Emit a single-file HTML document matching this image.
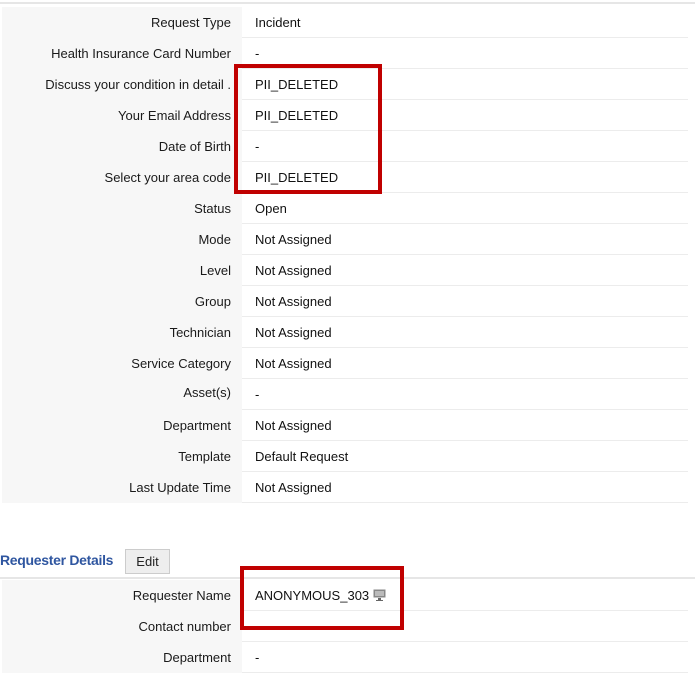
<!DOCTYPE html>
<html><head><style>
body{margin:0;width:695px;height:677px;background:#fff;font-family:"Liberation Sans",sans-serif;font-size:13px;color:#222;position:relative;overflow:hidden}
.top{position:absolute;left:0;top:2px;width:695px;height:2px;background:#e6e6e6}
.row{position:absolute;left:2px;width:686px;height:30px;border-bottom:1px solid #ececec}
.lab{position:absolute;left:0;top:0;width:240px;height:31px;background:#f7f7f7;text-align:right;line-height:32px;color:#1a1a1a}
.lab span{padding-right:11px}
.val{position:absolute;left:253px;top:0;line-height:32px;color:#111}
.box{position:absolute;border:4px solid #c00000}
.hdr{position:absolute;left:0;top:552px;color:#2f56a0;font-size:14px;font-weight:bold;letter-spacing:-0.3px}
.btn{position:absolute;left:125px;top:549px;width:43px;height:23px;background:#eee;border:1px solid #ccc;text-align:center;line-height:24px}
.line2{position:absolute;left:0;top:577px;width:695px;height:2px;background:#e6e6e6}
</style></head><body>
<div class="top"></div>
<div class="row" style="top:7px"><div class="lab"><span>Request Type</span></div><div class="val">Incident</div></div>
<div class="row" style="top:38px"><div class="lab"><span>Health Insurance Card Number</span></div><div class="val">-</div></div>
<div class="row" style="top:69px"><div class="lab"><span>Discuss your condition in detail .</span></div><div class="val">PII_DELETED</div></div>
<div class="row" style="top:100px"><div class="lab"><span>Your Email Address</span></div><div class="val">PII_DELETED</div></div>
<div class="row" style="top:131px"><div class="lab"><span>Date of Birth</span></div><div class="val">-</div></div>
<div class="row" style="top:162px"><div class="lab"><span>Select your area code</span></div><div class="val">PII_DELETED</div></div>
<div class="row" style="top:193px"><div class="lab"><span>Status</span></div><div class="val">Open</div></div>
<div class="row" style="top:224px"><div class="lab"><span>Mode</span></div><div class="val">Not Assigned</div></div>
<div class="row" style="top:255px"><div class="lab"><span>Level</span></div><div class="val">Not Assigned</div></div>
<div class="row" style="top:286px"><div class="lab"><span>Group</span></div><div class="val">Not Assigned</div></div>
<div class="row" style="top:317px"><div class="lab"><span>Technician</span></div><div class="val">Not Assigned</div></div>
<div class="row" style="top:348px"><div class="lab"><span>Service Category</span></div><div class="val">Not Assigned</div></div>
<div class="row" style="top:379px"><div class="lab" style="line-height:28px"><span>Asset(s)</span></div><div class="val">-</div></div>
<div class="row" style="top:410px"><div class="lab"><span>Department</span></div><div class="val">Not Assigned</div></div>
<div class="row" style="top:441px"><div class="lab"><span>Template</span></div><div class="val">Default Request</div></div>
<div class="row" style="top:472px"><div class="lab"><span>Last Update Time</span></div><div class="val">Not Assigned</div></div>
<div class="box" style="left:234px;top:64px;width:140px;height:122px"></div>
<div class="hdr">Requester Details</div>
<div class="btn">Edit</div>
<div class="line2"></div>
<div class="row" style="top:580px"><div class="lab"><span>Requester Name</span></div><div class="val">ANONYMOUS_303 <svg width="13" height="12" viewBox="0 0 13 12" style="vertical-align:-1px"><rect x="0.5" y="0.5" width="12" height="8" fill="#888"/><rect x="2" y="2" width="9" height="5" fill="#bbb"/><rect x="5" y="9" width="3" height="2" fill="#666"/><rect x="3" y="11" width="7" height="1" fill="#666"/></svg></div></div>
<div class="row" style="top:611px"><div class="lab"><span>Contact number</span></div><div class="val"></div></div>
<div class="row" style="top:642px"><div class="lab"><span>Department</span></div><div class="val">-</div></div>
<div class="box" style="left:240px;top:566px;width:156px;height:56px"></div>
</body></html>
